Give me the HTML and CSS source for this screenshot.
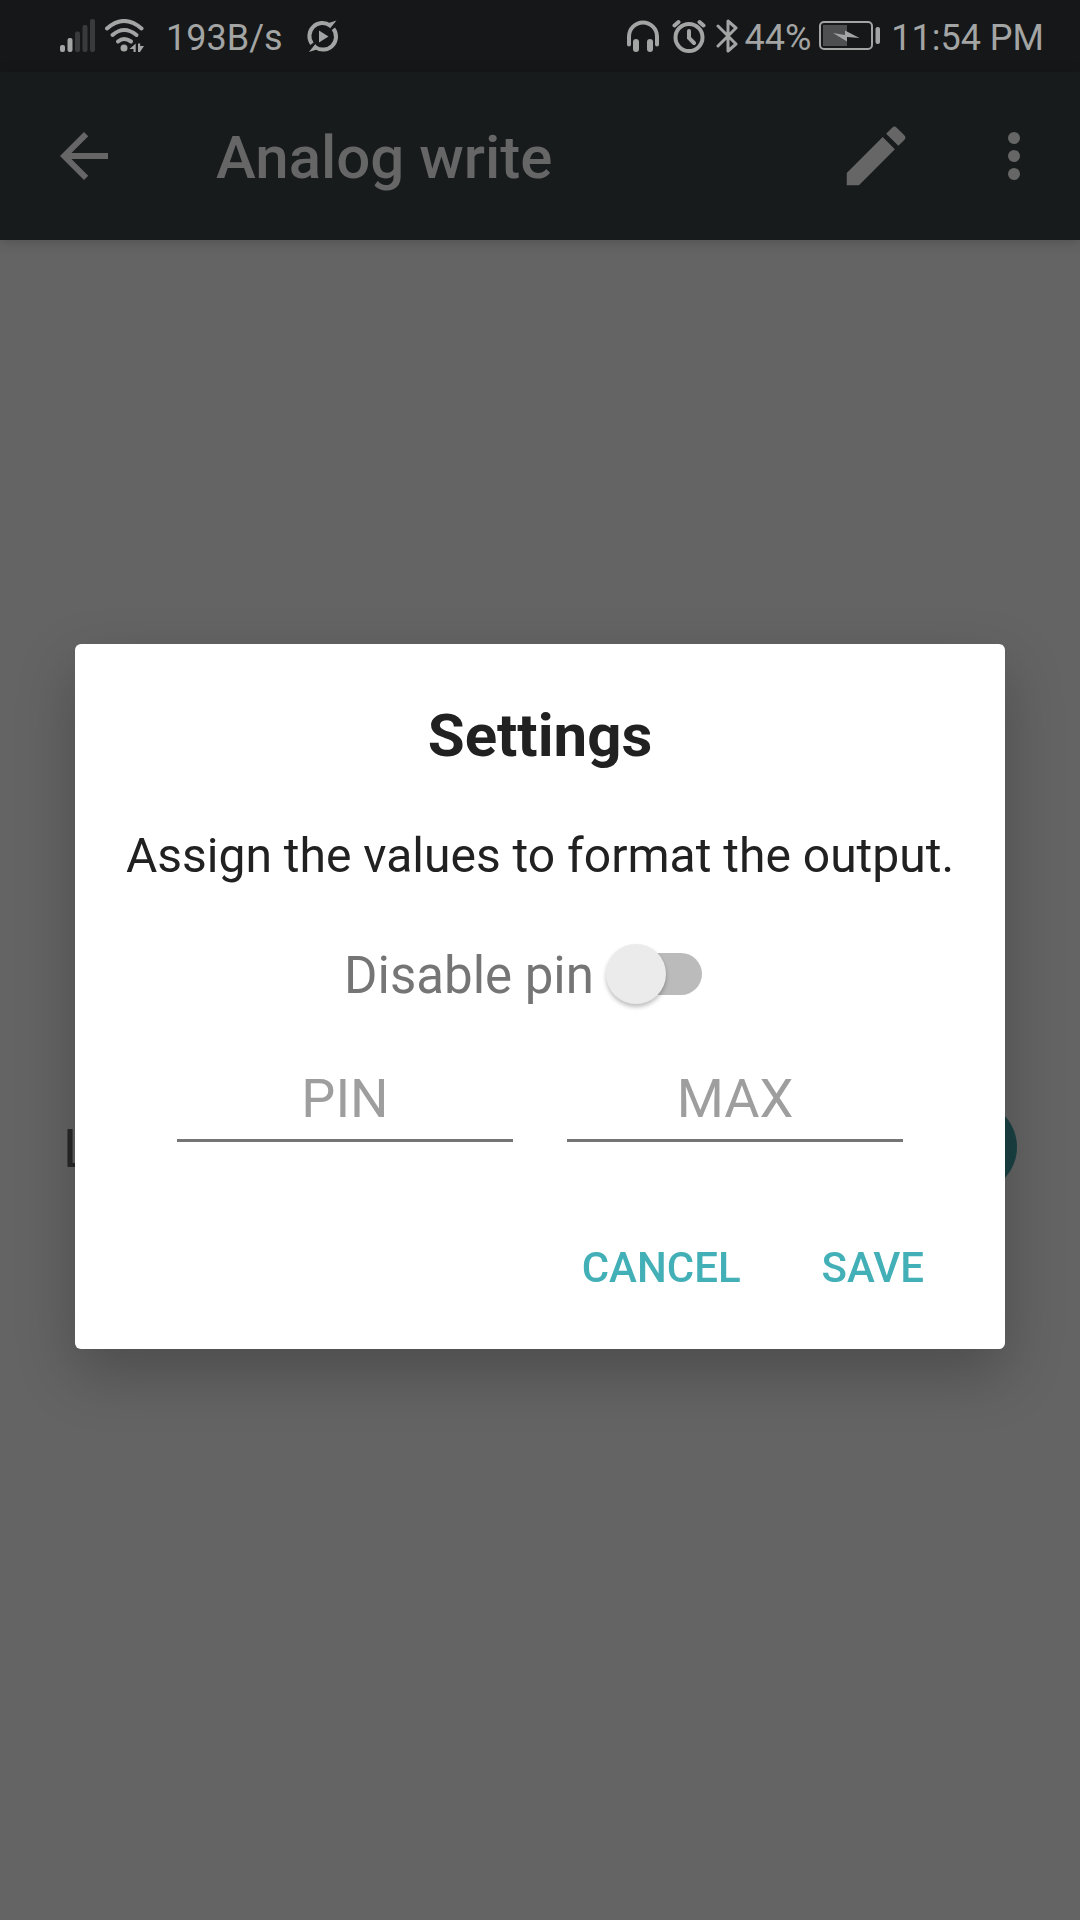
FILE: index.html
```html
<!DOCTYPE html>
<html lang="en">
<head>
<meta charset="utf-8">
<meta name="viewport" content="width=device-width, initial-scale=1">
<title>Analog write</title>
<link rel="stylesheet" href="styles.css">
</head>
<body>
<div class="screen">
  <div class="status">
    <div class="status-left">
      <svg viewBox="0 0 36 34" width="36" height="34" aria-hidden="true">
        <rect x="0" y="26" width="5" height="7" rx="2"/>
        <rect x="7.500" y="19" width="5" height="14" rx="2"/>
        <g class="faint">
          <rect x="15" y="12.500" width="5" height="20.500" rx="2"/>
          <rect x="22.500" y="6" width="5" height="27" rx="2"/>
          <rect x="30" y="0" width="5" height="33" rx="2"/>
        </g>
      </svg>
      <svg viewBox="0 0 40 34" width="40" height="34" aria-hidden="true">
        <g class="line">
          <path d="M3 9.500Q20-5.500 37.500 9.500"/>
          <path d="M8.500 16Q20 6 32.500 16"/>
          <path d="M14 22.500Q20 17.500 27 22.500"/>
        </g>
        <circle cx="20" cy="29" r="3.500"/>
        <path d="M31.700 24.500V33h-2.200v-3H25.500zM34 24.500h2.200V27H40l-4 6h-2z"/>
      </svg>
      <span class="rate">193B/s</span>
      <svg viewBox="0 0 32 34" width="32" height="34" aria-hidden="true">
        <g class="line flat">
          <path d="M5 24.800A13 13 0 0 1 23.200 6.600"/>
          <path d="M26.400 9.800A13 13 0 0 1 8.200 28"/>
        </g>
        <path d="M20 4.500L29.500 1.500 23 9.500zM11.400 30.100L1.900 33.100 8.400 25.100zM12 11.500v12l9.500-6z"/>
      </svg>
    </div>
    <div class="status-right">
      <svg class="phones" viewBox="0 0 34 34" width="34" height="34" aria-hidden="true">
        <path class="line" d="M3 25.500V17.500a14 14 0 0 1 28 0v8"/>
        <rect x="7" y="20" width="6" height="13" rx="3"/>
        <rect x="21" y="20" width="6" height="13" rx="3"/>
      </svg>
      <svg class="alarm" viewBox="0 0 34 34" width="34" height="34" aria-hidden="true">
        <g class="line"><circle cx="17" cy="18.500" r="13.500"/><path d="M17 12v7l5 5M2.500 6.500L6.500 3M31.500 6.500L27.500 3"/></g>
      </svg>
      <svg viewBox="0 0 22 34" width="22" height="34" aria-hidden="true">
        <path class="line thin" d="M2 7L20 25 12 32V2L20 9 2 27"/>
      </svg>
      <span class="percent">44%</span>
      <svg viewBox="0 0 62 30" width="62" height="30" aria-hidden="true">
        <rect class="case" x="1" y="1" width="52" height="27" rx="4"/>
        <rect class="charge" x="4" y="4" width="24" height="21"/>
        <path d="M14 12l12 2V9.500L40.500 17 28 16v4.500z"/>
        <rect x="56.500" y="6" width="4.500" height="17" rx="2"/>
      </svg>
      <span class="clock">11:54 PM</span>
    </div>
  </div>
  <header class="bar">
    <button class="icon-button" aria-label="Back"><svg viewBox="0 0 24 24" width="72" height="72"><path d="M20 11H7.830l5.590-5.590L12 4l-8 8 8 8 1.410-1.410L7.830 13H20v-2z"/></svg></button>
    <h1 class="title">Analog write</h1>
    <button class="icon-button edit" aria-label="Edit"><svg viewBox="0 0 24 24" width="78" height="78"><path d="M3 17.250V21h3.750L17.810 9.940l-3.750-3.750L3 17.250zM20.710 7.040a1 1 0 0 0 0-1.410l-2.340-2.340a1 1 0 0 0-1.410 0l-1.830 1.830 3.750 3.750 1.830-1.830z"/></svg></button>
    <button class="icon-button" aria-label="More options"><svg viewBox="0 0 24 24" width="72" height="72"><circle cx="12" cy="6" r="2"/><circle cx="12" cy="12" r="2"/><circle cx="12" cy="18" r="2"/></svg></button>
  </header>
  <main class="content">
    <div class="pin-row">
      <span class="pin-name">L</span>
      <button class="knob" aria-label="Set value"></button>
    </div>
  </main>
</div>
<div class="overlay">
  <form class="dialog" role="dialog" aria-labelledby="dialog-title">
    <h2 class="dialog-title" id="dialog-title">Settings</h2>
    <p class="message">Assign the values to format the output.</p>
    <div class="toggle">
      <label class="toggle-label" for="disable-pin">Disable pin</label>
      <input class="switch" id="disable-pin" type="checkbox" role="switch">
    </div>
    <div class="fields">
      <input class="field" type="text" placeholder="PIN" aria-label="Pin">
      <input class="field" type="text" placeholder="MAX" aria-label="Max">
    </div>
    <div class="actions">
      <button class="action" type="button">CANCEL</button>
      <button class="action" type="button">SAVE</button>
    </div>
  </form>
</div>
</body>
</html>
```
FILE: styles.css
```css
* { box-sizing: border-box; }
body {
  margin: 0;
  background: #646464;
  font-family: Roboto, "Liberation Sans", sans-serif;
}
button, input { font: inherit; }
button { border: 0; padding: 0; background: none; color: inherit; cursor: pointer; }
svg { display: block; flex: none; fill: currentColor; }

.screen { min-height: 100vh; display: flex; flex-direction: column; }

.status {
  height: 72px;
  padding: 0 36px 0 60px;
  display: flex;
  align-items: center;
  justify-content: space-between;
  background: #151718;
  color: #a3a4a4;
  font-size: 36px;
  line-height: 42px;
}
.status-left, .status-right { display: flex; align-items: center; gap: 8px; }
.line { fill: none; stroke: currentColor; stroke-width: 4; stroke-linecap: round; }
.thin { stroke-width: 3; stroke-linejoin: round; }
.flat { stroke-linecap: butt; }
.faint { opacity: .25; }
.rate { margin: 0 16px 0 14px; }
.rate, .percent, .clock { padding-top: 4px; }
.phones { margin-right: 4px; }
.alarm { margin-right: 2px; }
.percent { margin-left: -2px; }
.clock { margin-left: 2px; }
.case { fill: none; stroke: currentColor; stroke-width: 2; }
.charge { opacity: .4; }

.bar {
  height: 168px;
  padding: 0 30px 0 48px;
  display: flex;
  align-items: center;
  background: #171b1c;
  color: #666;
  box-shadow: 0 2px 12px rgba(0, 0, 0, .2);
}
.title {
  flex: 1;
  margin: 0 0 0 96px;
  padding-top: 4px;
  font-size: 60px;
  line-height: 72px;
  font-weight: 500;
}
.edit { margin-right: 63px; }

.content { flex: 1; padding: 861px 63px 0; }
.pin-row {
  display: flex;
  align-items: center;
  justify-content: space-between;
  color: #292929;
  font-size: 54px;
  line-height: 64px;
}
.pin-name { padding-top: 4px; }
.knob { width: 92px; height: 92px; border-radius: 50%; background: #1a4244; }

.overlay {
  position: fixed;
  inset: 0;
  padding: 72px 75px 0;
  display: flex;
  align-items: center;
  justify-content: center;
}
.dialog {
  width: 100%;
  max-width: 930px;
  padding: 56px 48px 27px;
  display: flex;
  flex-direction: column;
  border-radius: 6px;
  background: #fff;
  color: #212121;
  text-align: center;
  box-shadow: 0 24px 60px rgba(0, 0, 0, .24);
}
.dialog-title { margin: 0 0 56px; font-size: 60px; line-height: 72px; font-weight: 700; }
.message { margin: 0 0 54px; font-size: 48px; line-height: 56px; white-space: nowrap; }
.toggle {
  height: 72px;
  margin-bottom: 48px;
  padding-right: 34px;
  display: flex;
  align-items: center;
  justify-content: center;
  gap: 24px;
}
.toggle-label {
  padding-top: 4px;
  color: #757575;
  font-size: 51px;
  line-height: 64px;
}
.switch {
  appearance: none;
  position: relative;
  width: 84px;
  height: 42px;
  margin: 0;
  border-radius: 21px;
  background: #bbb;
}
.switch::before {
  content: "";
  position: absolute;
  left: -12px;
  top: -9px;
  width: 60px;
  height: 60px;
  border-radius: 50%;
  background: #ebebeb;
  box-shadow: 0 3px 4px rgba(0, 0, 0, .25);
}
.fields { padding: 0 54px; display: flex; gap: 54px; }
.field {
  flex: 1;
  min-width: 0;
  height: 84px;
  padding: 0;
  border: 0;
  border-bottom: 3px solid #757575;
  background: none;
  text-align: center;
  font-size: 54px;
}
.field::placeholder { color: #9e9e9e; opacity: 1; }
.actions { margin-top: 72px; padding: 0 9px; display: flex; justify-content: flex-end; gap: 33px; }
.action {
  height: 108px;
  padding: 0 24px;
  color: #43b0b7;
  font-size: 42px;
  line-height: 48px;
  font-weight: 500;
}
```
